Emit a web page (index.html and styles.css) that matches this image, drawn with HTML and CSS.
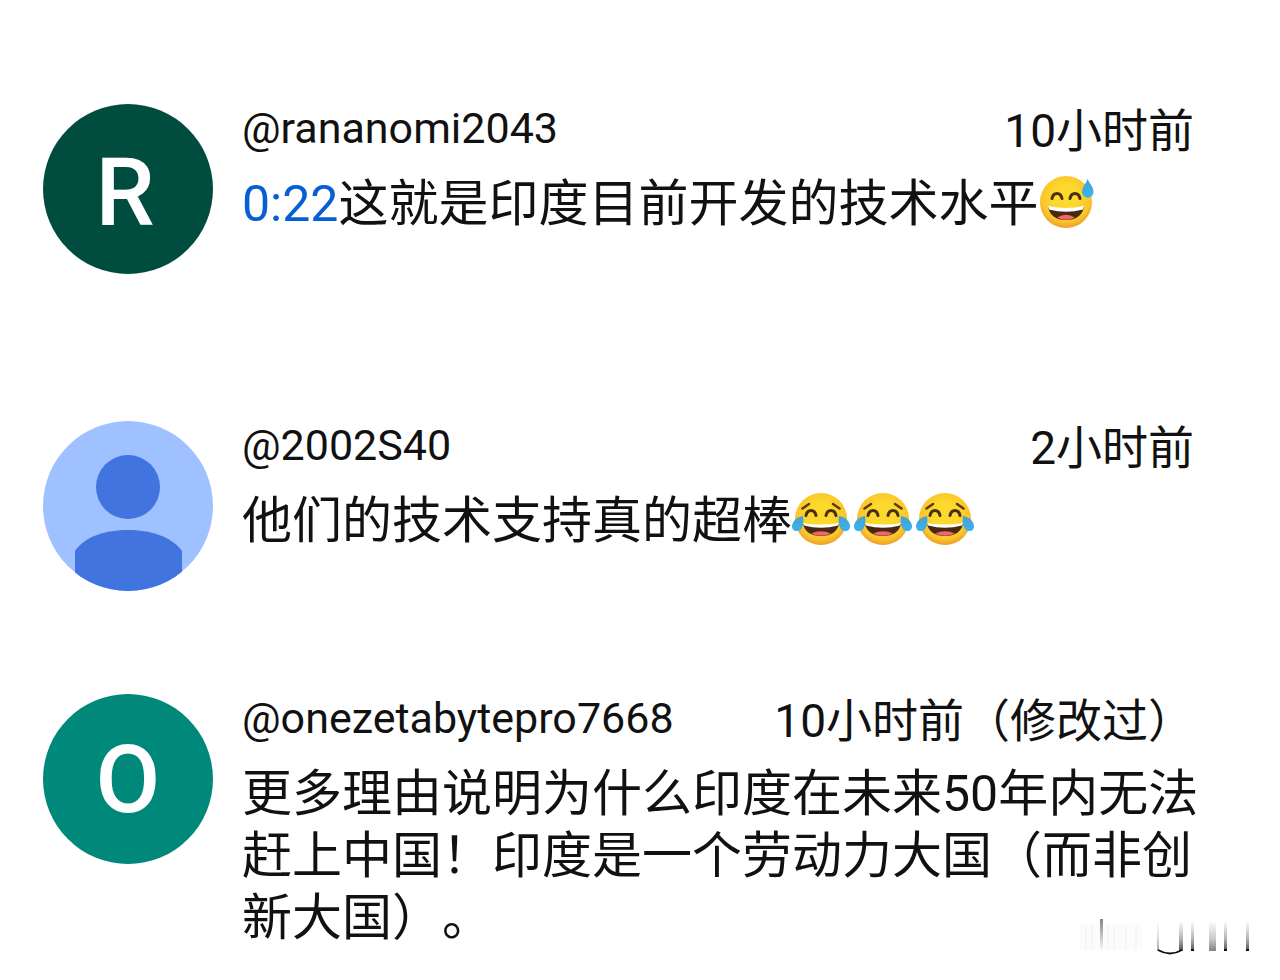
FILE: index.html
```html
<!DOCTYPE html>
<html lang="zh-CN">
<head>
<meta charset="utf-8">
<meta name="viewport" content="width=device-width, initial-scale=1">
<title>评论</title>
<link rel="stylesheet" href="styles.css">
</head>
<body>
<svg class="defs" width="0" height="0" aria-hidden="true">
  <defs>
    <radialGradient id="face" cx="50%" cy="42%" r="58%">
      <stop offset="0.4" stop-color="#fcd92c"/>
      <stop offset="0.8" stop-color="#fbc52a"/>
      <stop offset="1" stop-color="#eb9f2a"/>
    </radialGradient>
    <linearGradient id="drop" x1="0" y1="0" x2="0" y2="1">
      <stop offset="0" stop-color="#4a9fd2"/>
      <stop offset="1" stop-color="#35b4f0"/>
    </linearGradient>
    <symbol id="joy" viewBox="0 0 58 54">
      <circle cx="29" cy="27" r="26" fill="url(#face)"/>
      <path d="M10.500 16.500L17 12M47.500 16.500L41 12" fill="none" stroke="#5a3c14" stroke-width="2.500" stroke-linecap="round"/>
      <path d="M14 23.500q1-5 5-5t5 5M34 23.500q1-5 5-5t5 5" fill="none" stroke="#4a3010" stroke-width="3" stroke-linecap="round"/>
      <path d="M11 32Q29 36 47 32Q44 44 29 44T11 32Z" fill="#48280f"/>
      <path d="M11 31Q29 34 47 31L46 33.500Q29 38 12 33.500Z" fill="#fff"/>
      <path d="M19 41.500Q29 37 39 41.500Q29 46 19 41.500Z" fill="#ef6571"/>
      <path d="M11 24C12 30 11 39 5 39C-1 39-1 33 2 29Q5 25 11 24Z" fill="url(#drop)"/>
      <path d="M47 24C46 30 47 39 53 39C59 39 59 33 56 29Q53 25 47 24Z" fill="url(#drop)"/>
    </symbol>
    <symbol id="sweat" viewBox="0 0 58 54">
      <circle cx="28" cy="27" r="26" fill="url(#face)"/>
      <path d="M14 23.500q1-5 5-5t5 5M32 23.500q1-5 5-5t5 5" fill="none" stroke="#4a3010" stroke-width="3" stroke-linecap="round"/>
      <path d="M10 32Q28 36 46 32Q43 45 28 45T10 32Z" fill="#48280f"/>
      <path d="M10 31Q28 35 46 31L45 34.500Q28 39 11 34.500Z" fill="#fff"/>
      <path d="M19 42.500Q28 37 37 42.500Q28 47 19 42.500Z" fill="#ef6571"/>
      <path d="M49.500 4C52 9 55.500 12 55.500 17A5.500 5.500 0 0 1 44 17C44 12 48 9 49.500 4Z" fill="url(#drop)"/>
    </symbol>
  </defs>
</svg>
<main class="comments">
  <article class="comment comment-spaced">
    <div class="avatar avatar-dark">R</div>
    <div class="content">
      <header class="meta"><span class="name">@rananomi2043</span><time class="time">10小时前</time></header>
      <p class="text"><a class="stamp" href="#t22">0:22</a>这就是印度目前开发的技术水平<svg class="emoji" role="img" aria-label="苦笑"><use href="#sweat"/></svg></p>
    </div>
  </article>
  <article class="comment">
    <svg class="avatar" viewBox="0 0 170 170" role="img" aria-label="默认头像">
      <rect width="170" height="170" fill="#9fc1ff"/>
      <circle cx="85" cy="66" r="32" fill="#4274df"/>
      <path d="M32 170V130C42 115 63 109 85 109S128 115 139 130V170Z" fill="#4274df"/>
    </svg>
    <div class="content">
      <header class="meta"><span class="name">@2002S40</span><time class="time">2小时前</time></header>
      <p class="text">他们的技术支持真的超棒<svg class="emoji" role="img" aria-label="笑哭"><use href="#joy"/></svg><svg class="emoji" role="img" aria-label="笑哭"><use href="#joy"/></svg><svg class="emoji" role="img" aria-label="笑哭"><use href="#joy"/></svg></p>
    </div>
  </article>
  <article class="comment">
    <div class="avatar avatar-teal">O</div>
    <div class="content">
      <header class="meta"><span class="name">@onezetabytepro7668</span><time class="time">10小时前（修改过）</time></header>
      <p class="text">更多理由说明为什么印度在未来50年内无法赶上中国！印度是一个劳动力大国（而非创新大国）。</p>
    </div>
  </article>
</main>
<svg class="mark" viewBox="0 0 180 40" aria-hidden="true">
  <defs>
    <linearGradient id="fade" x1="0" y1="0" x2="0" y2="1">
      <stop offset="0" stop-color="#222" stop-opacity="0"/>
      <stop offset="0.6" stop-color="#222" stop-opacity="0.35"/>
      <stop offset="1" stop-color="#111" stop-opacity="0.75"/>
    </linearGradient>
    <linearGradient id="fall" x1="0" y1="0" x2="0" y2="1">
      <stop offset="0" stop-color="#333" stop-opacity="0.6"/>
      <stop offset="1" stop-color="#333" stop-opacity="0"/>
    </linearGradient>
  </defs>
  <path d="M0 4h62v28H0z" fill="#fcfcfc"/>
  <path d="M6 6v25M12 6v25M28 6v25M34 6v25M46 6v25M56 6v25" stroke="#f6f6f6" stroke-width="2"/>
  <rect x="20" y="0" width="3" height="32" fill="url(#fall)"/>
  <rect x="77" y="2" width="2" height="30" fill="url(#fade)" opacity="0.5"/>
  <rect x="99" y="2" width="4" height="30" fill="url(#fade)"/>
  <rect x="111" y="2" width="3" height="30" fill="url(#fade)"/>
  <rect x="129" y="2" width="7" height="30" fill="url(#fade)" opacity="0.7"/>
  <rect x="144" y="2" width="3" height="30" fill="url(#fade)"/>
  <rect x="166" y="2" width="3" height="30" fill="url(#fade)"/>
  <path d="M78 31Q90 38 102 31" fill="none" stroke="#111" stroke-width="2"/>
  <path d="M111 31h3M144 31h3M166 31h3" stroke="#111" stroke-width="2"/>
</svg>
</body>
</html>
```
FILE: styles.css
```css
* {
  box-sizing: border-box;
}

body {
  margin: 0;
  background: #fff;
  color: #111;
  font-family: Roboto, "Noto Sans CJK SC", sans-serif;
  text-spacing-trim: space-all;
}

.defs {
  position: absolute;
}

.comments {
  padding: 104px 80px 0 43px;
}

.comment {
  display: flex;
  align-items: flex-start;
  gap: 29px;
  min-height: 170px;
  margin-bottom: 103px;
}

.comment:last-child {
  margin-bottom: 0;
}

.comment-spaced {
  margin-bottom: 147px;
}

.avatar {
  flex: none;
  display: flex;
  align-items: center;
  justify-content: center;
  width: 170px;
  height: 170px;
  border-radius: 50%;
  overflow: hidden;
  color: #fff;
  font-size: 94px;
  line-height: 1;
}

.avatar-dark {
  padding: 8px 6px 0 0;
  background: #004d40;
  font-weight: 500;
}

.avatar-teal {
  padding-top: 2px;
  background: #00897b;
  font-weight: 500;
}

.content {
  flex: 1;
  min-width: 0;
}

.meta {
  display: flex;
  justify-content: space-between;
  align-items: flex-start;
  height: 69px;
  padding-right: 6px;
}

.name {
  font-size: 43px;
  line-height: 48px;
}

.time {
  font-size: 46px;
  line-height: 54px;
  white-space: nowrap;
}

.text {
  margin: 0;
  font-size: 50px;
  line-height: 62px;
}

.stamp {
  color: #065fd4;
  text-decoration: none;
}

.emoji {
  width: 58px;
  height: 54px;
  margin-right: 4px;
  vertical-align: -8px;
}

.mark {
  position: absolute;
  right: 20px;
  top: 919px;
  width: 180px;
  height: 40px;
}
```
